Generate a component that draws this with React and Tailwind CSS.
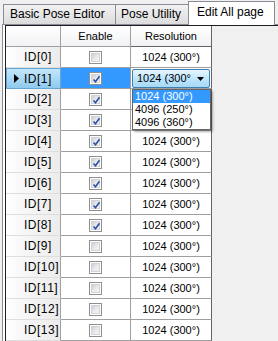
import React from "react";

const rows = Array.from({ length: 14 }, (_, i) => ({
  id: i,
  enabled: i >= 1 && i <= 8,
  res: "1024 (300°)",
}));

const options = ["1024 (300°)", "4096 (250°)", "4096 (360°)"];

function CheckBox({ checked }) {
  return (
    <div className="w-[13px] h-[13px] border border-[#8e8f8f] bg-white p-[1px]">
      <div className="relative w-full h-full bg-gradient-to-br from-[#cbcfd5] via-[#e8e9eb] to-[#f4f4f4] border border-[#d0d3d7]">
        {checked && (
          <svg viewBox="0 0 9 9" className="absolute left-0 top-0 w-[9px] h-[9px]">
            <path d="M1.5 4.5 L3.5 6.8 L7.5 1.2" fill="none" stroke="#2e4fa6" strokeWidth="1.6" />
          </svg>
        )}
      </div>
    </div>
  );
}

function ComboBox() {
  return (
    <div className="relative w-full h-full p-[1px]">
      <div className="flex items-center h-[19px] border border-[#3c7fb1] rounded-[2px] bg-gradient-to-b from-[#eaf6fd] via-[#bee6fd] to-[#a7d9f5] pl-[4px]">
        <span className="flex-1 overflow-hidden whitespace-nowrap">1024 (300°</span>
        <svg viewBox="0 0 7 4" className="w-[7px] h-[4px] mr-[5px] ml-[1px]">
          <path d="M0 0 H7 L3.5 4 Z" fill="#000" />
        </svg>
      </div>
      {/* open drop-down list, lies over the next rows */}
      <div className="absolute left-[1px] top-[21px] w-[79px] z-10 bg-white border border-[#646464] shadow-[2px_2px_2px_rgba(0,0,0,0.3)]">
        {options.map((o, i) => (
          <div
            key={o}
            className={
              i === 0
                ? "h-[13px] leading-[13px] pl-[2px] bg-[#3399ff] text-white"
                : "h-[13px] leading-[13px] pl-[2px] text-black"
            }
          >
            {o}
          </div>
        ))}
      </div>
    </div>
  );
}

export default function App() {
  return (
    <div
      className="w-[278px] h-[341px] overflow-hidden bg-[#f0f0f0] text-black"
      style={{ fontFamily: '"Liberation Sans", Arial, sans-serif' }}
    >
      {/* tabs */}
      <div className="flex items-end h-[24px] pl-[3px] text-[12px]">
        <div className="w-[113px] h-[20px] border border-b-0 border-[#898c95] bg-gradient-to-b from-[#f2f2f2] to-[#dcdcdc] pl-[6px] leading-[19px]">
          Basic Pose Editor
        </div>
        <div className="w-[73px] h-[20px] border border-l-0 border-b-0 border-[#898c95] bg-gradient-to-b from-[#f2f2f2] to-[#dcdcdc] pl-[5px] leading-[19px]">
          Pose Utility
        </div>
        <div className="w-[87px] h-[24px] -ml-[1px] border border-b-0 border-[#898c95] bg-white pl-[8px] leading-[21px] relative z-10 -mb-[1px]">
          Edit All page
        </div>
      </div>

      {/* panel */}
      <div className="ml-[2px] h-[317px] border-l border-t border-[#898c95] bg-white pl-[2px]">
        <div className="h-full border-l border-t border-[#1e1e1e] bg-[#f0f0f0] text-[11px]">
          {/* header */}
          <div className="flex h-[21px]">
            <div className="w-[55px] border-r border-b border-[#a0a0a0] bg-gradient-to-b from-white to-[#f1f2f4]" />
            <div className="w-[70px] border-r border-b border-[#a0a0a0] bg-gradient-to-b from-white to-[#f1f2f4] flex items-center justify-center">
              Enable
            </div>
            <div className="w-[81px] border-r border-b border-[#646464] bg-gradient-to-b from-white to-[#f1f2f4] flex items-center justify-center">
              Resolution
            </div>
          </div>
          {rows.map((r) => {
            const sel = r.id === 1;
            const hidden = r.id === 2 || r.id === 3;
            return (
              <div key={r.id} className="flex h-[21px]">
                <div
                  className={
                    sel
                      ? "relative w-[55px] border border-[#66a7d6] bg-gradient-to-b from-[#c4e6fa] to-[#8fcaee] flex items-center pl-[17px] text-[12px]"
                      : "w-[55px] border-r border-b border-r-[#a0a0a0] border-b-[#dedede] bg-gradient-to-r from-white via-[#f3f3f3] to-[#ececec] flex items-center pl-[18px] text-[12px]"
                  }
                >
                  {sel && (
                    <svg viewBox="0 0 5 9" className="absolute left-[7px] top-[5px] w-[5px] h-[9px]">
                      <path d="M0 0 L5 4.5 L0 9 Z" fill="#000" />
                    </svg>
                  )}
                  <span className="tracking-[0.5px]">ID[{r.id}]</span>
                </div>
                <div
                  className={
                    sel
                      ? "w-[70px] border-r border-b border-[#a0a0a0] bg-[#3399ff] flex items-center justify-center"
                      : "w-[70px] border-r border-b border-[#a0a0a0] bg-white flex items-center justify-center"
                  }
                >
                  <CheckBox checked={r.enabled} />
                </div>
                <div className="w-[81px] border-r border-b border-r-[#646464] border-b-[#a0a0a0] bg-white flex items-center justify-center">
                  {sel ? <ComboBox /> : hidden ? null : r.res}
                </div>
              </div>
            );
          })}
        </div>
      </div>
    </div>
  );
}
